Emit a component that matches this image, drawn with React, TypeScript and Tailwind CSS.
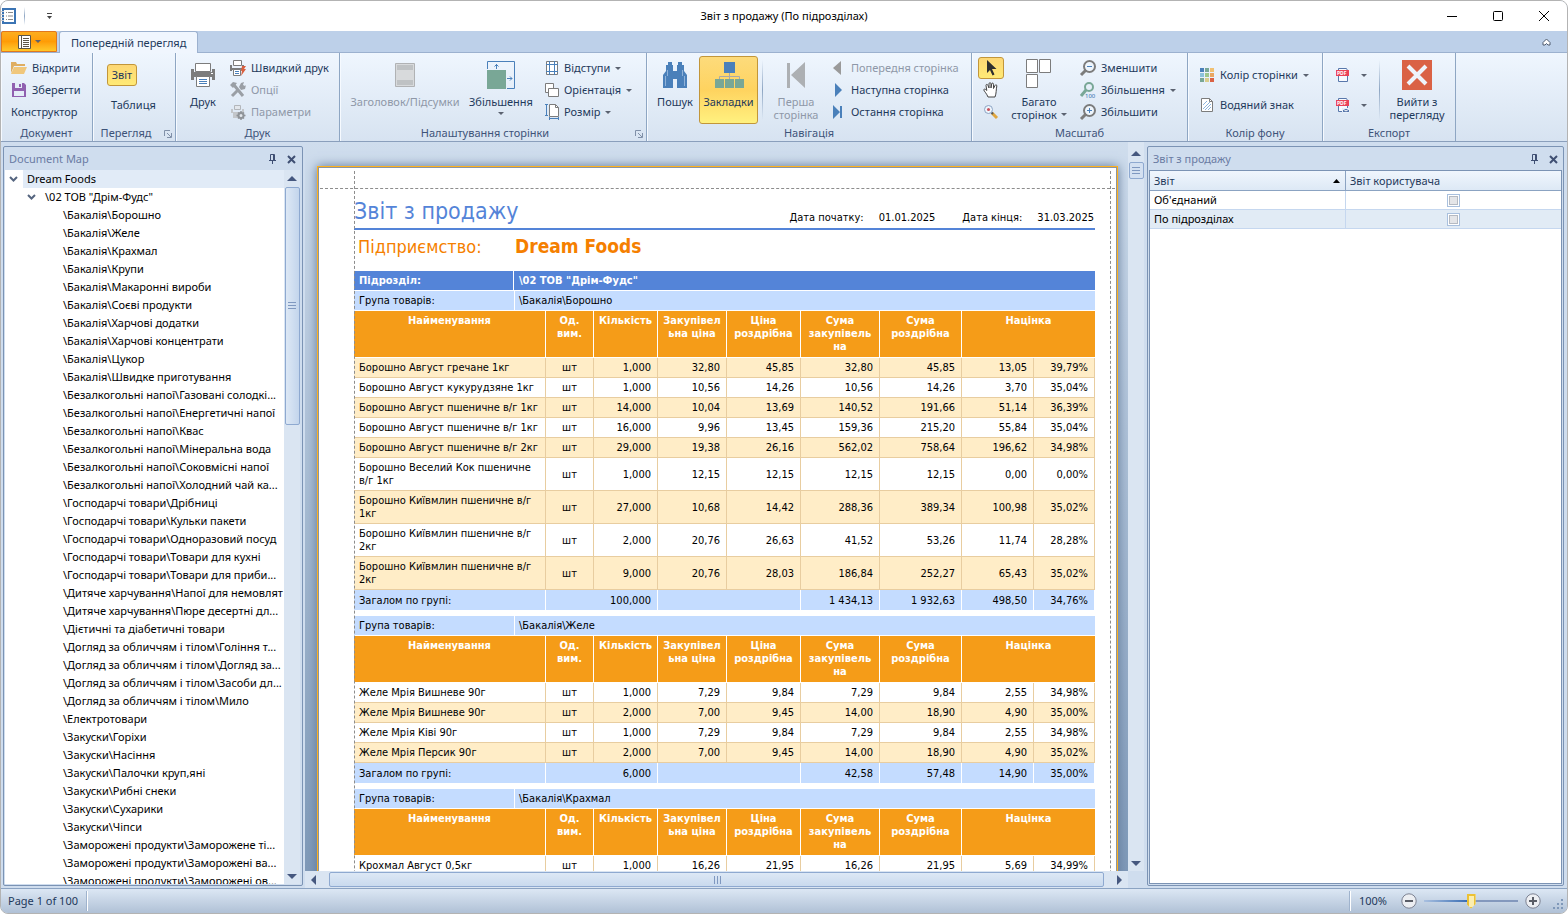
import { useState } from "react";
import type { ReactNode } from "react";
import clsx from "clsx";

const treeItems = [
  "\\Бакалія\\Борошно",
  "\\Бакалія\\Желе",
  "\\Бакалія\\Крахмал",
  "\\Бакалія\\Крупи",
  "\\Бакалія\\Макаронні вироби",
  "\\Бакалія\\Соєві продукти",
  "\\Бакалія\\Харчові додатки",
  "\\Бакалія\\Харчові концентрати",
  "\\Бакалія\\Цукор",
  "\\Бакалія\\Швидке приготування",
  "\\Безалкогольні напої\\Газовані солодкі...",
  "\\Безалкогольні напої\\Енергетичні напої",
  "\\Безалкогольні напої\\Квас",
  "\\Безалкогольні напої\\Мінеральна вода",
  "\\Безалкогольні напої\\Соковмісні напої",
  "\\Безалкогольні напої\\Холодний чай ка...",
  "\\Господарчі товари\\Дрібниці",
  "\\Господарчі товари\\Кульки пакети",
  "\\Господарчі товари\\Одноразовий посуд",
  "\\Господарчі товари\\Товари для кухні",
  "\\Господарчі товари\\Товари для приби...",
  "\\Дитяче харчування\\Напої для немовлят",
  "\\Дитяче харчування\\Пюре десертні дл...",
  "\\Дієтичні та діабетичні товари",
  "\\Догляд за обличчям і тілом\\Гоління т...",
  "\\Догляд за обличчям і тілом\\Догляд за...",
  "\\Догляд за обличчям і тілом\\Засоби дл...",
  "\\Догляд за обличчям і тілом\\Мило",
  "\\Електротовари",
  "\\Закуски\\Горіхи",
  "\\Закуски\\Насіння",
  "\\Закуски\\Палочки круп,яні",
  "\\Закуски\\Рибні снеки",
  "\\Закуски\\Сухарики",
  "\\Закуски\\Чіпси",
  "\\Заморожені продукти\\Заморожене ті...",
  "\\Заморожені продукти\\Заморожені ва...",
  "\\Заморожені продукти\\Заморожені ов...",
];

type Group = {
  name: string;
  striped: number;
  rows: string[][];
  total?: string[];
};

const groups: Group[] = [
  {
    name: "\\Бакалія\\Борошно",
    striped: 0,
    rows: [
      ["Борошно Август гречане 1кг", "1,000", "32,80", "45,85", "32,80", "45,85", "13,05", "39,79%"],
      ["Борошно Август кукурудзяне 1кг", "1,000", "10,56", "14,26", "10,56", "14,26", "3,70", "35,04%"],
      ["Борошно Август пшеничне в/г 1кг", "14,000", "10,04", "13,69", "140,52", "191,66", "51,14", "36,39%"],
      ["Борошно Август пшеничне в/г 1кг", "16,000", "9,96", "13,45", "159,36", "215,20", "55,84", "35,04%"],
      ["Борошно Август пшеничне в/г 2кг", "29,000", "19,38", "26,16", "562,02", "758,64", "196,62", "34,98%"],
      ["Борошно Веселий Кок пшеничне\nв/г 1кг", "1,000", "12,15", "12,15", "12,15", "12,15", "0,00", "0,00%"],
      ["Борошно Київмлин пшеничне в/г\n1кг", "27,000", "10,68", "14,42", "288,36", "389,34", "100,98", "35,02%"],
      ["Борошно Київмлин пшеничне в/г\n2кг", "2,000", "20,76", "26,63", "41,52", "53,26", "11,74", "28,28%"],
      ["Борошно Київмлин пшеничне в/г\n2кг", "9,000", "20,76", "28,03", "186,84", "252,27", "65,43", "35,02%"],
    ],
    total: ["100,000", "1 434,13", "1 932,63", "498,50", "34,76%"],
  },
  {
    name: "\\Бакалія\\Желе",
    striped: 1,
    rows: [
      ["Желе Мрія Вишневе 90г", "1,000", "7,29", "9,84", "7,29", "9,84", "2,55", "34,98%"],
      ["Желе Мрія Вишневе 90г", "2,000", "7,00", "9,45", "14,00", "18,90", "4,90", "35,00%"],
      ["Желе Мрія Ківі 90г", "1,000", "7,29", "9,84", "7,29", "9,84", "2,55", "34,98%"],
      ["Желе Мрія Персик 90г", "2,000", "7,00", "9,45", "14,00", "18,90", "4,90", "35,02%"],
    ],
    total: ["6,000", "42,58", "57,48", "14,90", "35,00%"],
  },
  {
    name: "\\Бакалія\\Крахмал",
    striped: 1,
    rows: [["Крохмал Август 0,5кг", "1,000", "16,26", "21,95", "16,26", "21,95", "5,69", "34,99%"]],
  },
];

const columns = [
  "Найменування",
  "Од.\nвим.",
  "Кількість",
  "Закупівел\nьна ціна",
  "Ціна\nроздрібна",
  "Сума\nзакупівель\nна",
  "Сума\nроздрібна",
];

/* ---------- icons ---------- */

const Svg = ({ w = 16, h = 16, children }: { w?: number; h?: number; children: ReactNode }) => (
  <svg width={w} height={h} viewBox={`0 0 ${w} ${h}`} fill="none" className="shrink-0 overflow-visible" aria-hidden="true">
    {children}
  </svg>
);

const Caret = ({ className }: { className?: string }) => (
  <svg width="6" height="3" viewBox="0 0 6 3" className={clsx("shrink-0", className)} aria-hidden="true">
    <path d="M0 0h6L3 3z" fill="#5b6270" />
  </svg>
);

const FolderIcon = () => (
  <Svg>
    <path d="M0 13V2h5l1 2h8v2H3z" fill="#dfae62" />
    <path d="M3 7h13l-3 7H0z" fill="#f0c77c" />
  </Svg>
);

const SaveIcon = () => (
  <Svg>
    <path d="M1 1h12l2 2v12H1z" fill="#9060b0" />
    <path d="M4 1h7v5H4z" fill="#e4edf8" />
    <path d="M8 2h2v3H8z" fill="#9060b0" />
    <path d="M3 9h10v5H3z" fill="#e4edf8" />
  </Svg>
);

const PrinterIcon = () => (
  <Svg w={24} h={26}>
    <path d="M0 7h3v3h18V7h3v11h-3v-3H3v3H0z" fill="#7c7c7c" />
    <path d="M4.500 1.500h15v8h-15z" fill="#fff" stroke="#7c7c7c" />
    <path d="M5.500 14.500h13v10h-13z" fill="#fff" stroke="#7c7c7c" />
    <path d="M8 17.500h8M8 19.500h8M8 21.500h8" stroke="#4a80ba" />
    <path d="M20 11h2v1h-2z" fill="#fff" />
  </Svg>
);

const QuickPrintIcon = () => (
  <Svg>
    <path d="M0 5h2v3h10V5h2v6h-2v-1H2v1H0z" fill="#7c7c7c" />
    <path d="M3.500.500h8v5h-8zM3.500 9.500h7v6h-7z" fill="#fff" stroke="#7c7c7c" />
    <path d="M5 11.500h4M5 13.500h4" stroke="#4a80ba" />
    <path d="M12 6h4l-2 3h2l-5 7 1-5h-1z" fill="#d9603f" />
  </Svg>
);

const ToolsIcon = () => (
  <Svg>
    <path d="M2 14l7-7M4 3l9 11" stroke="#9a9fa5" strokeWidth="3" />
    <path d="M0 3l3-3 4 1-4 5zM9 5l2-4 3-1-1 3 2 1 1-1-1 4-4 1z" fill="#9a9fa5" />
  </Svg>
);

const ParamsIcon = () => (
  <Svg>
    <path d="M1 5h2v3h9V5h2v4h-3v5H3V9H1z" fill="#c3c6ca" />
    <path d="M4.500 1.500h6v4h-6z" fill="#e3e7ec" stroke="#b3b6ba" />
    <circle cx="11" cy="11.500" r="2.500" fill="#e3e7ec" stroke="#8f9398" strokeWidth="2" />
    <path d="M11 7v2M11 14v2M6.500 11.500h2M13.500 11.500h2M8 8.500l1 1M13 13.500l1 1M14 8.500l-1 1M8 14.500l1-1" stroke="#8f9398" strokeWidth="1.500" />
  </Svg>
);

const HeaderFooterIcon = () => (
  <Svg w={20} h={24}>
    <path d="M.5.5h19v23H.5z" fill="#d8dadc" stroke="#b0b2b4" />
    <path d="M2 2h16v5H2zM2 17h16v5H2z" fill="#bfc2c4" />
  </Svg>
);

const ScaleIcon = () => (
  <Svg w={28} h={28}>
    <path d="M.5 8V.5h27v27H20" stroke="#4a80ba" />
    <path d="M0 9h19v19H0z" fill="#79a796" />
    <path d="M9.500 3v5M7.500 5.500l2-2 2 2M20 17.500h5M23 15.500l2 2-2 2" stroke="#4a80ba" />
  </Svg>
);

const MarginsIcon = () => (
  <Svg w={14}>
    <path d="M1.500 1.500h11v13h-11z" fill="#fff" stroke="#7c7c7c" />
    <path d="M4.500 1v14M9.500 1v14M1 4.500h12M1 11.500h12" stroke="#4a80ba" />
  </Svg>
);

const OrientationIcon = () => (
  <Svg w={14}>
    <path d="M.5 1.500h8v9h-8z" fill="#fff" stroke="#7c7c7c" />
    <path d="M3.500 6.500h10v8h-10z" fill="#fff" stroke="#7c7c7c" />
  </Svg>
);

const SizeIcon = () => (
  <Svg w={14}>
    <path d="M4.500.5h6l3 3v9h-9z" fill="#fff" stroke="#7c7c7c" />
    <path d="M10.500.5v3h3" stroke="#7c7c7c" />
    <path d="M0 .5h3M0 11.500h3M1.500.5v11M4.500 14.500h9M4.500 13v3M13.500 13v3" stroke="#4a80ba" />
  </Svg>
);

const BinocularsIcon = () => (
  <Svg w={26} h={28}>
    <path d="M4 4h2V1h4v3h1v6h4V4h1V1h4v3h2v6l3 4v13H15v-9h-4v9H1V14l3-4z" fill="#4a80ba" />
    <path d="M5.500 9v6M3.500 15v10M20.500 9v6M22.500 15v10" stroke="#8fb2d9" />
  </Svg>
);

const MapIcon = () => (
  <Svg w={30} h={28}>
    <path d="M10 1h11v11H10z" fill="#4a80ba" />
    <path d="M15.500 12v6M5.500 18v-2.500h20V18" stroke="#a9a9a9" />
    <path d="M1 18h9v9H1zM11 18h9v9h-9zM21 18h9v9h-9z" fill="#79a796" />
  </Svg>
);

const FirstPageIcon = () => (
  <Svg w={18} h={26}>
    <path d="M0 1h3v25H0zM18 0v26L4 13z" fill="#adb0b3" />
  </Svg>
);

const PointerIcon = () => (
  <Svg>
    <path d="M4 0v13l3-3 2.500 5.500 2-1L9 9h4.500z" fill="#2f2f2f" />
  </Svg>
);

const HandIcon = () => (
  <Svg>
    <path d="M5 15C4 12 1 9 .8 8c0-1.500 1.700-1 3 .5L3 3.500c0-1.500 1.500-1.500 2 0L6 6V1.800C6 .3 8 .3 8 1.800V6l.7-4c.2-1.300 1.800-1.200 1.800.3V6.500l1.500-3c.5-1.200 2-.8 1.800.5C13 8 13.500 11 12 15z" fill="#fff" stroke="#444" />
  </Svg>
);

const MagnifierIcon = () => (
  <Svg>
    <path d="M9 9l5 5" stroke="#e0a63e" strokeWidth="3" />
    <path d="M8 8l2 2" stroke="#555" strokeWidth="2" />
    <circle cx="5.500" cy="5.500" r="4" fill="#eef5fc" stroke="#8ba4c4" />
    <circle cx="5.500" cy="5.500" r="1.500" fill="#c9505a" />
  </Svg>
);

const PagesIcon = () => (
  <Svg w={26} h={30}>
    <path d="M.5.500h11v13H.5zM13.500.500h11v13h-11zM.5 15.500h11v13H.5z" fill="#fff" stroke="#7c7c7c" />
  </Svg>
);

const ZoomIcon = ({ kind }: { kind: "out" | "in" | "100" }) => (
  <Svg>
    {kind === "100" ? (
      <>
        <circle cx="9" cy="5" r="4" stroke="#79a796" strokeWidth="2" />
        <path d="M6 8l-5 6" stroke="#79a796" strokeWidth="3" />
        <text x="5" y="16" fontSize="6" fontFamily="Noto Sans, sans-serif" fill="#2f6fae">
          100
        </text>
      </>
    ) : (
      <>
        <circle cx="9.500" cy="6.500" r="5.500" fill="#eef5fc" stroke="#7c7c7c" strokeWidth="2" />
        <path d="M6 10l-5 5" stroke="#7c7c7c" strokeWidth="3" />
        <path d={kind === "in" ? "M7 6.500h5M9.500 4v5" : "M7 6.500h5"} stroke="#4a80ba" />
      </>
    )}
  </Svg>
);

const PaletteIcon = () => (
  <Svg>
    <path d="M1 1h4v4H1z" fill="#4a80ba" />
    <path d="M6 1h4v4H6zM1 11h4v4H1z" fill="#79a796" />
    <path d="M11 1h4v4h-4z" fill="#f0c072" />
    <path d="M1 6h4v4H1z" fill="#8cc3dc" />
    <path d="M6 6h4v4H6z" fill="#9cc78c" />
    <path d="M11 6h4v4h-4z" fill="#e9a662" />
    <path d="M6 11h4v4H6z" fill="#d9cd8c" />
    <path d="M11 11h4v4h-4z" fill="#da6245" />
  </Svg>
);

const WatermarkIcon = () => (
  <Svg>
    <path d="M2.500 1.500h8l3 3v10h-11z" fill="#fff" stroke="#7c7c7c" />
    <path d="M10.500 1.500v3h3" stroke="#7c7c7c" />
    <path d="M4 8l4-4M4 12l7-7M6 13l6-6M9 13l3-3" stroke="#8db4dd" />
  </Svg>
);

const PdfIcon = ({ mail }: { mail?: boolean }) => (
  <Svg>
    <path d="M3.500 3V1.500h8l1 2M3.500 9v5.500h9V9" stroke="#5877ab" fill="#f7faff" />
    <path d="M1 3h13v6H1z" fill="#ea4158" />
    <text x="2" y="8" fontSize="5" fontWeight="700" fontFamily="Noto Sans, sans-serif" fill="#fff">
      PDF
    </text>
    {mail && <path d="M7.500 11.500h7v4h-7z" fill="#5877ab" stroke="#e9f1fa" />}
    {mail && <path d="M8 12l3 2 3-2" stroke="#fff" />}
  </Svg>
);

const ExitIcon = () => (
  <Svg w={30} h={30}>
    <path d="M0 0h30v30H0z" fill="#da6245" />
    <path d="M6 6l18 18M24 6L6 24" stroke="#eef4fb" strokeWidth="4" />
  </Svg>
);

const PinIcon = () => (
  <Svg w={9} h={10}>
    <path d="M2.500 6V.5h4V6M1 6.500h7M4.500 6.500V10M5.500 1v5" stroke="#3f4f73" />
  </Svg>
);

const CrossIcon = () => (
  <Svg w={9} h={9}>
    <path d="M1 1l7 7M8 1L1 8" stroke="#3f4f73" strokeWidth="2" />
  </Svg>
);

const Arrow = ({ dir }: { dir: "up" | "down" | "left" | "right" }) => {
  const paths = { up: "M0 7l5-5 5 5z", down: "M0 3l5 5 5-5z", left: "M7 0L2 5l5 5z", right: "M3 0l5 5-5 5z" };
  return (
    <Svg w={10} h={10}>
      <path d={paths[dir]} fill="#46587f" />
    </Svg>
  );
};

/* ---------- ribbon ---------- */

function RibbonGroup({ title, width, launcher, children }: { title: string; width: string; launcher?: boolean; children: ReactNode }) {
  return (
    <section className={clsx("flex shrink-0 flex-col border-r border-[#8ea6c3] shadow-[inset_1px_0_#f6faff]", width)}>
      <div className="flex flex-1 pt-[3px]">{children}</div>
      <div className={clsx("relative h-[17px] text-center leading-[17px] text-[#3e5379]", launcher && "pr-4")}>
        {title}
        {launcher && (
          <button type="button" aria-label={title} className="absolute right-[3px] bottom-[3px]">
            <Svg w={8} h={8}>
              <path d="M.5 6V.5H6M3 3l4 4M7.500 3v4.500H3" stroke="#8090a8" />
            </Svg>
          </button>
        )}
      </div>
    </section>
  );
}

type ButtonProps = { icon?: ReactNode; label: string; caret?: boolean; disabled?: boolean };

function SmallButton({ icon, label, caret, disabled }: ButtonProps) {
  return (
    <button type="button" disabled={disabled} className="flex h-[22px] items-center gap-[5px] whitespace-nowrap disabled:text-[#8f98a8]">
      {icon}
      <span>{label}</span>
      {caret && <Caret />}
    </button>
  );
}

function LargeButton({ icon, label, caret, disabled, active, className }: ButtonProps & { active?: boolean; className: string }) {
  return (
    <button
      type="button"
      disabled={disabled}
      className={clsx(
        "flex h-[68px] shrink-0 flex-col items-center rounded-[3px] border leading-[13px] whitespace-pre disabled:text-[#8f98a8]",
        active ? "border-[#c2963a] bg-linear-to-b from-[#fddb7b] via-[#fed35f] to-[#fff17f]" : "border-transparent",
        className,
      )}
    >
      <span className="mb-[2px] flex h-[36px] items-center">{icon}</span>
      <span>{label}</span>
      {caret && <Caret className="mt-1" />}
    </button>
  );
}

const Divider = ({ className }: { className?: string }) => (
  <div className={clsx("w-px shrink-0 bg-linear-to-b from-transparent via-[#8ea6c3] to-transparent", className)} />
);

function Ribbon() {
  return (
    <div className="flex h-[89px] shrink-0 border-b border-[#8a9fbc] bg-linear-to-b from-[#eff6fe] to-[#d7e3f1] text-[#1e395b]">
      <RibbonGroup title="Документ" width="w-[92px]">
        <div className="flex flex-col pt-px pl-[10px]">
          <SmallButton icon={<FolderIcon />} label="Відкрити" />
          <SmallButton icon={<SaveIcon />} label="Зберегти" />
          <SmallButton label="Конструктор" />
        </div>
      </RibbonGroup>
      <RibbonGroup title="Перегляд" width="w-[83px]" launcher>
        <div className="flex flex-col items-start gap-2 pt-2 pl-[14px]">
          <button type="button" className="h-[22px] w-[30px] rounded-[3px] border border-[#c2963a] bg-linear-to-b from-[#fdd775] to-[#ffea75]">
            Звіт
          </button>
          <button type="button" className="h-[22px] pl-1">
            Таблиця
          </button>
        </div>
      </RibbonGroup>
      <RibbonGroup title="Друк" width="w-[164px]">
        <LargeButton icon={<PrinterIcon />} label="Друк" className="ml-1 w-[46px]" />
        <div className="ml-1 flex flex-col pt-px">
          <SmallButton icon={<QuickPrintIcon />} label="Швидкий друк" />
          <SmallButton icon={<ToolsIcon />} label="Опції" disabled />
          <SmallButton icon={<ParamsIcon />} label="Параметри" disabled />
        </div>
      </RibbonGroup>
      <RibbonGroup title="Налаштування сторінки" width="w-[307px]" launcher>
        <LargeButton icon={<HeaderFooterIcon />} label="Заголовок/Підсумки" disabled className="ml-1 w-[122px]" />
        <LargeButton icon={<ScaleIcon />} label="Збільшення" caret className="w-[70px]" />
        <div className="ml-[9px] flex flex-col pt-px">
          <SmallButton icon={<MarginsIcon />} label="Відступи" caret />
          <SmallButton icon={<OrientationIcon />} label="Орієнтація" caret />
          <SmallButton icon={<SizeIcon />} label="Розмір" caret />
        </div>
      </RibbonGroup>
      <RibbonGroup title="Навігація" width="w-[325px]">
        <LargeButton icon={<BinocularsIcon />} label="Пошук" className="ml-1 w-[48px]" />
        <LargeButton icon={<MapIcon />} label="Закладки" active className="w-[59px]" />
        <Divider className="mx-1 my-1" />
        <LargeButton icon={<FirstPageIcon />} label={"Перша\nсторінка"} disabled className="w-[58px]" />
        <div className="ml-2 flex flex-col pt-px">
          <SmallButton icon={<Svg w={13} h={14}><path d="M8 0v14L0 7z" fill="#9a9a9a" /></Svg>} label="Попередня сторінка" disabled />
          <SmallButton icon={<Svg w={13} h={14}><path d="M2 0v14l7-7z" fill="#4a80ba" /></Svg>} label="Наступна сторінка" />
          <SmallButton icon={<Svg w={13} h={14}><path d="M0 0v14l7-7zM7 1h2v12H7z" fill="#4a80ba" /></Svg>} label="Остання сторінка" />
        </div>
      </RibbonGroup>
      <RibbonGroup title="Масштаб" width="w-[216px]">
        <div className="ml-[6px] flex w-[26px] flex-col pt-px">
          <button type="button" aria-label="Вказівник" className="flex h-[22px] items-center justify-center rounded-[3px] border border-[#c2963a] bg-linear-to-b from-[#fdd775] to-[#ffea75]">
            <PointerIcon />
          </button>
          <button type="button" aria-label="Рука" className="flex h-[22px] items-center justify-center">
            <HandIcon />
          </button>
          <button type="button" aria-label="Лупа" className="flex h-[22px] items-center justify-center">
            <MagnifierIcon />
          </button>
        </div>
        <button type="button" className="ml-[2px] flex h-[68px] w-[66px] flex-col items-center leading-[13px]">
          <span className="mb-[3px] flex h-[36px] items-center">
            <PagesIcon />
          </span>
          <span>Багато</span>
          <span className="flex items-center gap-1">
            сторінок <Caret />
          </span>
        </button>
        <div className="ml-2 flex flex-col pt-px">
          <SmallButton icon={<ZoomIcon kind="out" />} label="Зменшити" />
          <SmallButton icon={<ZoomIcon kind="100" />} label="Збільшення" caret />
          <SmallButton icon={<ZoomIcon kind="in" />} label="Збільшити" />
        </div>
      </RibbonGroup>
      <RibbonGroup title="Колір фону" width="w-[135px]">
        <div className="flex flex-col gap-2 pt-2 pl-[11px]">
          <SmallButton icon={<PaletteIcon />} label="Колір сторінки" caret />
          <SmallButton icon={<WatermarkIcon />} label="Водяний знак" />
        </div>
      </RibbonGroup>
      <RibbonGroup title="Експорт" width="w-[133px]">
        <div className="flex flex-col gap-2 pt-2 pl-[12px]">
          <button type="button" aria-label="PDF" className="flex h-[22px] items-center gap-[10px]">
            <PdfIcon /> <Caret />
          </button>
          <button type="button" aria-label="PDF e-mail" className="flex h-[22px] items-center gap-[10px]">
            <PdfIcon mail /> <Caret />
          </button>
        </div>
        <Divider className="my-1 ml-3" />
        <LargeButton icon={<ExitIcon />} label={"Вийти з\nперегляду"} className="ml-[5px] w-[64px]" />
      </RibbonGroup>
    </div>
  );
}

/* ---------- panels ---------- */

function PanelTitle({ title }: { title: string }) {
  return (
    <div className="flex h-[22px] shrink-0 items-center gap-[10px] px-1 text-[#6a7ba3]">
      <h2 className="mr-auto">{title}</h2>
      <button type="button" aria-label="Закріпити">
        <PinIcon />
      </button>
      <button type="button" aria-label="Закрити">
        <CrossIcon />
      </button>
    </div>
  );
}

const Chevron = () => (
  <Svg w={9} h={8}>
    <path d="M1 2l3.500 3.500L8 2" stroke="#55657f" strokeWidth="2" />
  </Svg>
);

const grip = (
  <Svg w={8} h={8}>
    <path d="M0 .5h8M0 3.500h8M0 6.500h8" stroke="#7f98c0" />
  </Svg>
);

function DocumentMap() {
  return (
    <aside className="flex w-[300px] shrink-0 flex-col rounded-[2px] border border-[#7b93b4] bg-[#cfddee] p-px pr-[2px]">
      <PanelTitle title="Document Map" />
      <div className="flex min-h-0 flex-1 bg-white">
        <ul className="min-w-0 flex-1 overflow-hidden leading-[18px] whitespace-pre text-black">
          <li className="flex h-[18px] items-center">
            <span className="w-[18px] pl-1">
              <Chevron />
            </span>
            <span className="flex-1 bg-[#e1ebf7] pl-1">Dream Foods</span>
          </li>
          <li className="flex h-[18px] items-center pl-[22px]">
            <span className="w-[18px]">
              <Chevron />
            </span>
            {"\\02 ТОВ \"Дрім-Фудс\""}
          </li>
          {treeItems.map((item) => (
            <li key={item} className="h-[18px] pl-[58px]">
              {item}
            </li>
          ))}
        </ul>
        <div className="flex w-4 shrink-0 flex-col items-center bg-[#dae5f2]">
          <button type="button" aria-label="Вгору" className="flex h-[17px] items-center">
            <Arrow dir="up" />
          </button>
          <div className="flex h-[238px] w-[15px] items-center justify-center rounded-[2px] border border-[#8ea9d0] bg-linear-to-r from-[#dde8f5] to-[#c3d5ec]">
            {grip}
          </div>
          <button type="button" aria-label="Вниз" className="mt-auto flex h-[17px] items-center">
            <Arrow dir="down" />
          </button>
        </div>
      </div>
    </aside>
  );
}

function ReportGroup({ group }: { group: Group }) {
  return (
    <section className="mb-[6px]">
      <div className="flex h-5 border-b border-white bg-[#c4dcff] leading-5">
        <span className="w-[161px] border-r border-white pl-[5px]">Група товарів:</span>
        <span className="pl-1">{group.name}</span>
      </div>
      <table className="w-full table-fixed border-separate border-spacing-0">
        <colgroup>
          <col className="w-[192px]" />
          <col className="w-[48px]" />
          <col className="w-[64px]" />
          <col className="w-[69px]" />
          <col className="w-[74px]" />
          <col className="w-[79px]" />
          <col className="w-[82px]" />
          <col className="w-[72px]" />
          <col />
        </colgroup>
        <thead>
          <tr className="h-[47px] bg-[#f59c18] text-white">
            {columns.map((c) => (
              <th key={c} className="border-r border-b border-white pt-[3px] align-top leading-[13px] font-bold whitespace-pre">
                {c}
              </th>
            ))}
            <th colSpan={2} className="border-b border-white pt-[3px] align-top leading-[13px] font-bold">
              Націнка
            </th>
          </tr>
        </thead>
        <tbody>
          {group.rows.map(([name, ...values], i) => (
            <tr key={i} className={clsx(name.includes("\n") ? "h-[33px]" : "h-5", i % 2 === group.striped ? "bg-[#ffedc7]" : "bg-white")}>
              <td className="border-r border-b border-[#e8cda0] pl-[5px] leading-[13px] whitespace-pre">{name}</td>
              <td className="border-r border-b border-[#e8cda0] text-center leading-[13px]">шт</td>
              {values.map((v, j) => (
                <td key={j} className="border-r border-b border-[#e8cda0] pr-[6px] text-right leading-[13px]">
                  {v}
                </td>
              ))}
            </tr>
          ))}
          {group.total && (
            <tr className="h-5 bg-[#c4dcff]">
              <td className="border-r border-white pl-[5px] leading-[13px]">Загалом по групі:</td>
              <td colSpan={2} className="border-r border-white pr-[6px] text-right leading-[13px]">
                {group.total[0]}
              </td>
              <td colSpan={2} className="border-r border-white" />
              {group.total.slice(1).map((v, j) => (
                <td key={j} className="border-r border-white pr-[6px] text-right leading-[13px]">
                  {v}
                </td>
              ))}
            </tr>
          )}
        </tbody>
      </table>
    </section>
  );
}

function Viewer() {
  return (
    <main className="flex min-w-0 flex-1 flex-col">
      <div className="flex min-h-0 flex-1">
        <div className="min-w-0 flex-1 overflow-hidden bg-linear-to-b from-[#cfdded] to-[#7f99b8] pt-[24px] pr-[10px] pl-3">
          <article className="relative mx-auto h-[1132px] w-[801px] border border-[#ffb11c] bg-white pr-[22px] pl-[36px] font-['DejaVu_Sans_Condensed','Noto_Sans',sans-serif] text-[11px] text-black shadow-[inset_0_0_0_1px_#8b94a0,0_0_10px_#5f7896]">
            <div className="absolute inset-y-1 left-[36px] border-l border-dashed border-[#8d8d8d]" />
            <div className="absolute inset-y-1 right-[6px] border-l border-dashed border-[#8d8d8d]" />
            <div className="absolute inset-x-[2px] top-[21px] border-t border-dashed border-[#8d8d8d]" />
            <header className="mt-[26px] flex h-[37px] items-end border-b-2 border-[#5484d8] pb-[2px]">
              <h1 className="mr-auto text-[23px] leading-[30px] text-[#5484d8]">Звіт з продажу</h1>
              <p className="flex gap-[15px] pr-px leading-4">
                <span>Дата початку:</span>
                <span className="mr-3">01.01.2025</span>
                <span>Дата кінця:</span>
                <span>31.03.2025</span>
              </p>
            </header>
            <p className="flex h-[41px] pl-1 text-[18px] leading-[33px] text-[#f57f00]">
              <span className="w-[157px]">Підприємство:</span>
              <strong className="text-[19px]">Dream Foods</strong>
            </p>
            <p className="flex h-5 border-b border-white bg-[#5484d8] leading-5 font-bold text-white">
              <span className="w-[160px] border-r border-white pl-[5px]">Підрозділ:</span>
              <span className="pl-[5px]">{"\\02 ТОВ \"Дрім-Фудс\""}</span>
            </p>
            {groups.map((g) => (
              <ReportGroup key={g.name} group={g} />
            ))}
          </article>
        </div>
        <div className="flex w-4 shrink-0 flex-col items-center bg-[#dae5f2] pt-1">
          <button type="button" aria-label="Попередня" className="flex h-[16px] items-center">
            <Arrow dir="up" />
          </button>
          <div className="flex h-[17px] w-[15px] items-center justify-center rounded-[2px] border border-[#8ea9d0] bg-[#d3e0f1]">
            {grip}
          </div>
          <button type="button" aria-label="Наступна" className="mt-auto flex h-[17px] items-center">
            <Arrow dir="down" />
          </button>
        </div>
      </div>
      <div className="mr-4 flex h-[17px] shrink-0 items-center bg-[#dae5f2] px-1">
        <button type="button" aria-label="Ліворуч">
          <Arrow dir="left" />
        </button>
        <div className="mx-[10px] flex h-[15px] flex-1 items-center justify-center rounded-[2px] border border-[#8ea9d0] bg-linear-to-b from-[#dde8f5] to-[#c9daee]">
          <span className="rotate-90">{grip}</span>
        </div>
        <button type="button" aria-label="Праворуч">
          <Arrow dir="right" />
        </button>
      </div>
    </main>
  );
}

function ReportPanel() {
  return (
    <aside className="flex w-[417px] shrink-0 flex-col rounded-[2px] border border-[#7b93b4] bg-[#cfddee] p-px">
      <PanelTitle title="Звіт з продажу" />
      <div className="flex-1 border border-[#7b93b4] bg-white">
        <table className="w-full table-fixed border-separate border-spacing-0 text-black">
          <thead>
            <tr className="h-5 bg-linear-to-b from-[#f0f6fd] to-[#dce8f5] text-left text-[#1e395b]">
              <th className="w-[196px] border-r border-b border-[#8ba3c2] px-1 font-normal">
                <span className="flex items-center justify-between pr-px">
                  Звіт
                  <svg width="7" height="4" viewBox="0 0 7 4" aria-hidden="true">
                    <path d="M0 4h7L3.500 0z" />
                  </svg>
                </span>
              </th>
              <th className="border-b border-[#8ba3c2] px-1 font-normal">Звіт користувача</th>
            </tr>
          </thead>
          <tbody>
            {["Об'єднаний", "По підрозділах"].map((name, i) => (
              <tr key={name} className={clsx("h-[19px]", i === 1 && "bg-[#e1ebf5]")}>
                <td className="border-r border-b border-[#c5d7ef] px-1">{name}</td>
                <td className="border-b border-[#c5d7ef] text-center">
                  <input
                    type="checkbox"
                    aria-label={name}
                    className="mx-auto block size-[13px] appearance-none border border-[#a9c0de] bg-[#e4e5e8] shadow-[inset_0_0_0_1px_#fff,inset_0_0_0_2px_#b5bac2]"
                  />
                </td>
              </tr>
            ))}
          </tbody>
        </table>
      </div>
    </aside>
  );
}

function ZoomButton({ plus, onClick }: { plus?: boolean; onClick: () => void }) {
  return (
    <button type="button" onClick={onClick} aria-label={plus ? "Збільшити" : "Зменшити"}>
      <Svg>
        <circle cx="8" cy="8" r="7.200" fill="#eceef2" stroke="#7d8292" />
        <path d={plus ? "M4 8h8M8 4v8" : "M4 8h8"} stroke="#5a5d66" strokeWidth="2" />
      </Svg>
    </button>
  );
}

function StatusBar() {
  const [zoom, setZoom] = useState(100);

  return (
    <footer className="flex h-[25px] shrink-0 items-center border-t border-[#8ba3c2] bg-linear-to-b from-[#dce7f4] to-[#b0c1d6] text-[#1e395b]">
      <span className="pl-[7px]">Page 1 of 100</span>
      <div className="ml-2 h-5 w-[2px] border-l border-[#9fb3cd] bg-white" />
      <div className="mr-2 ml-auto h-5 w-[2px] border-l border-[#9fb3cd] bg-white" />
      <label htmlFor="zoom" className="mr-[14px]">
        {zoom}%
      </label>
      <ZoomButton onClick={() => setZoom(Math.max(0, zoom - 10))} />
      <input
        id="zoom"
        type="range"
        min={0}
        max={200}
        value={zoom}
        onChange={(e) => setZoom(Number(e.target.value))}
        className="mx-[7px] h-4 w-[94px] appearance-none bg-[linear-gradient(to_right,#a9c0e0,#2f66b0_50%,#8398bd_50%)] bg-[length:100%_2px] bg-center bg-no-repeat [&::-webkit-slider-thumb]:h-[15px] [&::-webkit-slider-thumb]:w-[9px] [&::-webkit-slider-thumb]:appearance-none [&::-webkit-slider-thumb]:border-2 [&::-webkit-slider-thumb]:border-[#ecc134] [&::-webkit-slider-thumb]:bg-[#fbeeb0] [&::-webkit-slider-thumb]:[clip-path:polygon(0_0,100%_0,100%_70%,50%_100%,0_70%)]"
      />
      <ZoomButton plus onClick={() => setZoom(Math.min(200, zoom + 10))} />
      <div className="ml-3 self-end pr-1 pb-1">
        <Svg w={10} h={10}>
          <path d="M8 0h2v2H8zM4 4h2v2H4zM8 4h2v2H8zM0 8h2v2H0zM4 8h2v2H4zM8 8h2v2H8z" fill="#7f98b9" />
        </Svg>
      </div>
    </footer>
  );
}

function TitleBar() {
  return (
    <header className="flex h-[30px] shrink-0 items-center bg-white">
      <div className="flex flex-1 items-center">
        <Svg w={16} h={18}>
          <path d="M2 2h12v14H2z" fill="#fff" stroke="#3b74b4" strokeWidth="2" />
          <path d="M5 5.500h1M7 5.500h5M5 9h1M7 9h5M5 12.500h1M7 12.500h5" stroke="#8a8a8a" />
          <path d="M0 4.500h3M0 7.500h3M0 10.500h3M0 13.500h3" stroke="#c9cfd8" />
        </Svg>
        <Divider className="ml-[7px] h-[18px]" />
        <button type="button" aria-label="Панель швидкого доступу" className="ml-[22px]">
          <Svg w={5} h={6}>
            <path d="M0 .5h5" stroke="#444" />
            <path d="M0 3h5L2.500 6z" fill="#444" />
          </Svg>
        </button>
      </div>
      <h1 className="text-[11px] text-black">Звіт з продажу (По підрозділах)</h1>
      <div className="flex flex-1 justify-end">
        <button type="button" aria-label="Згорнути" className="flex h-[30px] w-[46px] items-center justify-center">
          <Svg w={10} h={10}><path d="M0 5.500h10" stroke="#000" /></Svg>
        </button>
        <button type="button" aria-label="Розгорнути" className="flex h-[30px] w-[46px] items-center justify-center">
          <Svg w={10} h={10}><rect x=".5" y=".5" width="9" height="9" rx="1" stroke="#000" /></Svg>
        </button>
        <button type="button" aria-label="Закрити" className="flex h-[30px] w-[46px] items-center justify-center">
          <Svg w={10} h={10}><path d="M0 0l10 10M10 0L0 10" stroke="#000" /></Svg>
        </button>
      </div>
    </header>
  );
}

export default function App() {
  return (
    <div className="flex h-screen flex-col overflow-hidden rounded-lg border border-[#b3b3b3] bg-[#cfddee] font-['Noto_Sans',sans-serif] text-[11px] leading-4">
      <TitleBar />
      <nav className="flex h-[22px] shrink-0 items-end border-b border-[#9cb1cf] bg-[#bdd0e9]">
        <button
          type="button"
          aria-label="Файл"
          className="flex h-[21px] w-[56px] items-center justify-center gap-1 rounded-t-[2px] border border-[#e0781e] bg-linear-to-b from-[#fcae1e] via-[#ff9c05] to-[#ffc828]"
        >
          <Svg w={13} h={14}>
            <path d="M.5.500h12v13H.5z" fill="#fff" stroke="#5d5648" />
            <path d="M3.500 1v12" stroke="#5d5648" />
            <path d="M5 3.500h6M5 5.500h6M5 7.500h6M5 9.500h6M5 11.500h6" stroke="#5d5648" />
          </Svg>
          <Caret />
        </button>
        <button type="button" className="-mb-px ml-[2px] h-[22px] rounded-t-[3px] border border-b-0 border-[#9cb1cf] bg-[#f0f6fe] px-[11px] text-[#1e395b]">
          Попередній перегляд
        </button>
        <button type="button" aria-label="Згорнути стрічку" className="mr-4 mb-[6px] ml-auto">
          <Svg w={9} h={8}>
            <path d="M1 4.500L4.500 1 8 4.500V7H6L4.500 5.500 3 7H1z" fill="#fff" stroke="#4e5a6e" />
          </Svg>
        </button>
      </nav>
      <Ribbon />
      <div className="flex min-h-0 flex-1">
        <div className="flex px-[2px] pt-1 pb-[2px]">
          <DocumentMap />
        </div>
        <Viewer />
        <div className="flex pt-1 pr-[3px] pb-[2px] pl-[3px]">
          <ReportPanel />
        </div>
      </div>
      <StatusBar />
    </div>
  );
}
